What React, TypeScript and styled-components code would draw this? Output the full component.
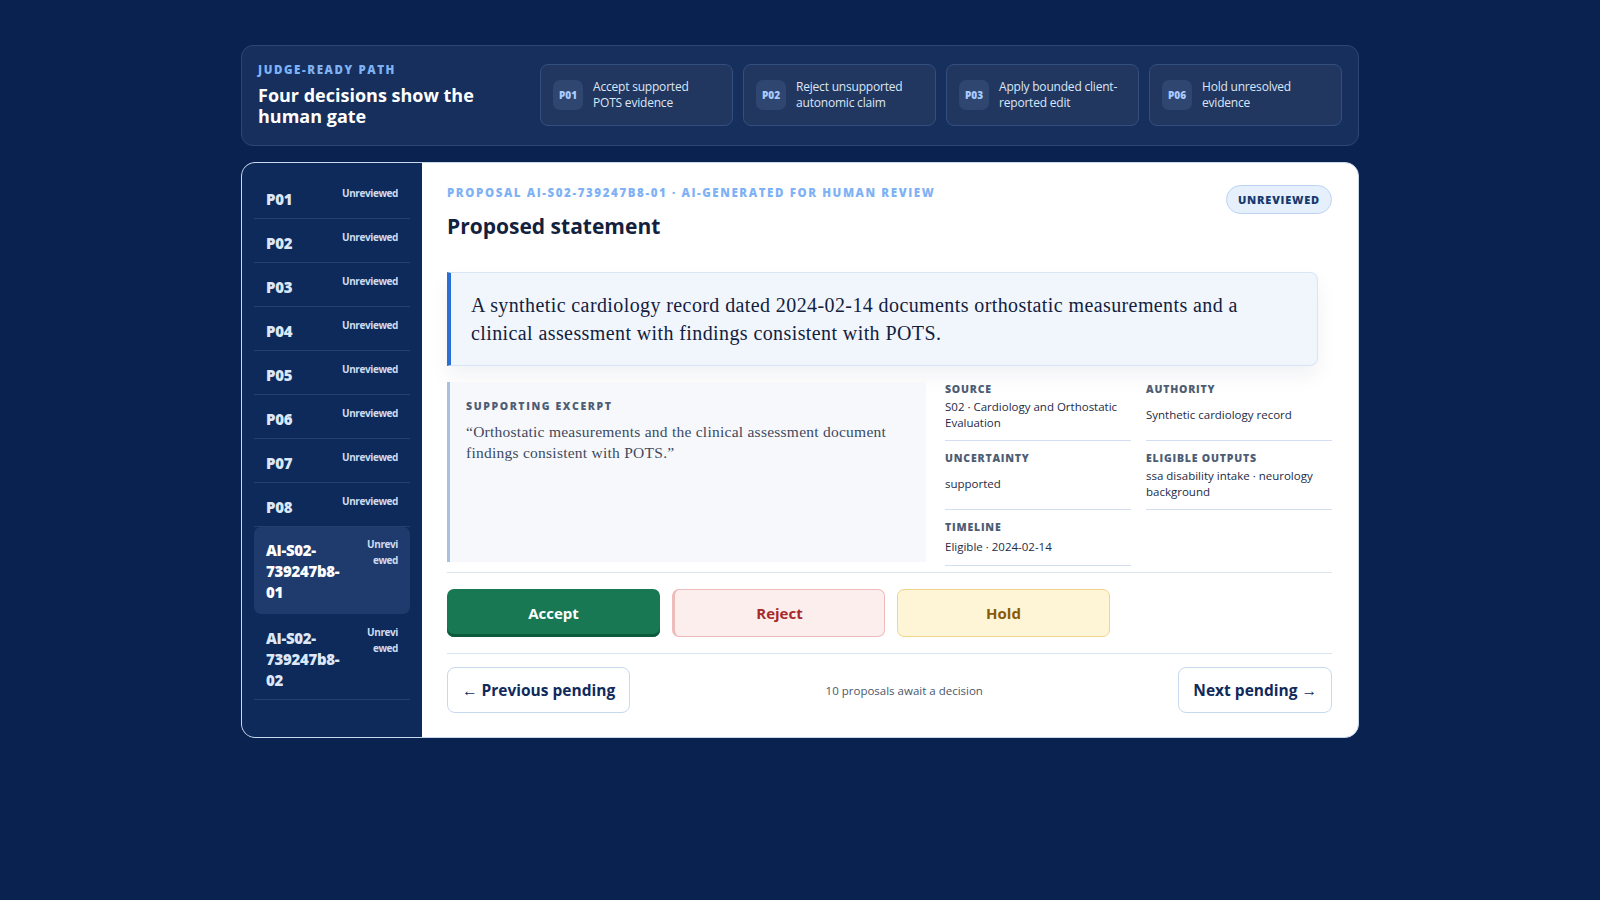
import React from "react";
import styled, { createGlobalStyle } from "styled-components";

const Global = createGlobalStyle`
  html, body { margin: 0; padding: 0; background: #0a2250; }
  body { font-family: "Open Sans", "Noto Sans", sans-serif; color: #0f1f3d; }
  * { box-sizing: border-box; }
`;

const Page = styled.div`
  min-height: 900px;
  background: #0a2250;
  padding: 45px 0;
`;
const Wrap = styled.div`
  width: 1118px;
  margin: 0 auto;
  display: flex;
  flex-direction: column;
  gap: 16px;
`;
const Header = styled.header`
  display: flex;
  align-items: center;
  gap: 10px;
  padding: 14px 16px 16px 16px;
  background: #162f5c;
  border: 1px solid #2c4677;
  border-radius: 12px;
  height: 101px;
`;
const HeaderTitle = styled.div`
  width: 272px;
  flex-shrink: 0;
`;
const Eyebrow = styled.div<{ $c?: string; $size?: number }>`
  font-size: ${(p) => p.$size ?? 12}px;
  font-weight: 800;
  letter-spacing: 1.6px;
  color: ${(p) => p.$c ?? "#7fb2f5"};
  text-transform: uppercase;
`;
const HTitle = styled.div`
  color: #fff;
  font-weight: 700;
  font-size: 18px;
  line-height: 21px;
  margin-top: 8px;
`;
const Step = styled.div`
  flex: 1;
  height: 62px;
  display: flex;
  align-items: center;
  gap: 10px;
  padding: 0 12px;
  background: #21375f;
  border: 1px solid #334f80;
  border-radius: 8px;
`;
const StepBadge = styled.div`
  width: 30px;
  height: 30px;
  border-radius: 7px;
  background: #2f4670;
  color: #a9cbff;
  font-size: 10px;
  font-weight: 800;
  display: flex;
  align-items: center;
  justify-content: center;
  flex-shrink: 0;
`;
const StepText = styled.div`
  color: #dbe6f7;
  font-size: 12px;
  line-height: 16px;
  letter-spacing: -0.2px;
`;
const Main = styled.div`
  display: flex;
  background: #fff;
  border-radius: 14px;
  overflow: hidden;
  border: 1px solid #c7d7ee;
  height: 576px;
`;
const Side = styled.nav`
  width: 180px;
  flex-shrink: 0;
  background: #0d2a5a;
  padding: 12px 12px 0 12px;
  display: flex;
  flex-direction: column;
`;
const Item = styled.div<{ $active?: boolean }>`
  display: flex;
  justify-content: space-between;
  align-items: flex-start;
  padding: ${(p) => (p.$active ? "9px 12px 10px 12px" : "10px 12px 8px 12px")};
  border-bottom: 1px solid ${(p) => (p.$active ? "transparent" : "#24406d")};
  background: ${(p) => (p.$active ? "#1f3b6e" : "transparent")};
  border-radius: ${(p) => (p.$active ? "7px" : "0")};
  min-height: 44px;
`;
const ItemId = styled.div<{ $active?: boolean }>`
  color: ${(p) => (p.$active ? "#fff" : "#dce7f8")};
  font-size: 15px;
  font-weight: 800;
  line-height: 21px;
  width: 90px;
  margin-top: 4px;
  letter-spacing: -0.3px;
`;
const ItemState = styled.div<{ $narrow?: boolean }>`
  color: #cfdcf0;
  font-size: 10px;
  font-weight: 700;
  letter-spacing: -0.4px;
  text-align: right;
  line-height: 16px;
  white-space: ${(p) => (p.$narrow ? "normal" : "nowrap")};
  width: ${(p) => (p.$narrow ? "34px" : "auto")};
  word-break: break-all;
`;
const Content = styled.section`
  flex: 1;
  padding: 22px 26px 20px 25px;
  display: flex;
  flex-direction: column;
`;
const TopRow = styled.div`
  display: flex;
  justify-content: space-between;
  align-items: flex-start;
`;
const Title = styled.h1`
  margin: 12px 0 0;
  font-size: 21px;
  font-weight: 700;
  color: #13213d;
`;
const Pill = styled.div`
  border: 1px solid #bcd3f0;
  background: #e6f0fc;
  color: #173a6e;
  border-radius: 16px;
  padding: 6px 11px;
  font-size: 11px;
  font-weight: 800;
  letter-spacing: 0.8px;
`;
const Statement = styled.blockquote`
  margin: 32px 14px 0 0;
  padding: 18px 20px;
  background: #f1f6fd;
  border: 1px solid #d9e5f5;
  border-left: 4px solid #2a6fd6;
  border-radius: 0 8px 8px 0;
  font-family: "Liberation Serif", "DejaVu Serif", serif;
  font-size: 20px;
  letter-spacing: 0.4px;
  line-height: 28px;
  color: #13213d;
  box-shadow: 0 10px 20px rgba(20, 40, 80, 0.06);
`;
const Evidence = styled.div`
  display: grid;
  grid-template-columns: 479px 1fr;
  gap: 19px;
  margin-top: 16px;
  padding-bottom: 6px;
  border-bottom: 1px solid #dbe5f1;
`;
const Excerpt = styled.div`
  background: #f6f8fb;
  border-left: 3px solid #a8c1e3;
  padding: 17px 16px;
  height: 180px;
`;
const Quote = styled.p`
  margin: 8px 0 0;
  font-family: "Liberation Serif", serif;
  font-size: 15.5px;
  letter-spacing: 0.25px;
  line-height: 21px;
  color: #3d4a5e;
`;
const Meta = styled.div`
  display: grid;
  grid-template-columns: 1fr 1fr;
  column-gap: 15px;
  align-content: start;
`;
const MetaCell = styled.div<{ $last?: boolean }>`
  border-bottom: 1px solid #d3dff0;
  padding: 0 0 6px;
  display: flex;
  flex-direction: column;
  min-height: ${(p) => (p.$last ? 46 : 59)}px;
  margin-bottom: ${(p) => (p.$last ? 0 : 10)}px;
`;
const MetaLabel = styled.div`
  font-size: 10.5px;
  font-weight: 800;
  letter-spacing: 0.8px;
  color: #4e5d74;
`;
const MetaValue = styled.div`
  font-size: 11.5px;
  line-height: 16px;
  color: #1d2b45;
  flex: 1;
  display: flex;
  align-items: center;
`;
const Actions = styled.div`
  display: flex;
  gap: 12px;
  padding: 16px 0;
  border-bottom: 1px solid #dbe5f1;
`;
const Btn = styled.button<{ $kind: "accept" | "reject" | "hold" }>`
  width: 213px;
  height: 48px;
  border-radius: 7px;
  font-family: inherit;
  font-size: 15px;
  font-weight: 700;
  cursor: pointer;
  ${(p) =>
    p.$kind === "accept"
      ? "background:#177853;color:#fff;border:none;box-shadow:inset 0 -3px 0 #0c5a3c;"
      : p.$kind === "reject"
      ? "background:#fdeeee;color:#a82a2a;border:1px solid #efbcbc;border-left:3px solid #efbcbc;"
      : "background:#fef4d6;color:#8a5a08;border:1px solid #efd58e;"}
`;
const Footer = styled.div`
  display: flex;
  align-items: center;
  justify-content: space-between;
  padding-top: 13px;
`;
const NavBtn = styled.button`
  height: 46px;
  padding: 0 14px;
  background: #fff;
  border: 1px solid #c8d8ee;
  border-radius: 8px;
  font-family: inherit;
  font-size: 15.5px;
  font-weight: 700;
  color: #102a5c;
`;
const Count = styled.div`
  font-size: 11.5px;
  color: #4a576c;
`;

const items = ["P01", "P02", "P03", "P04", "P05", "P06", "P07", "P08"];
const steps = [
  ["P01", "Accept supported POTS evidence"],
  ["P02", "Reject unsupported autonomic claim"],
  ["P03", "Apply bounded client-reported edit"],
  ["P06", "Hold unresolved evidence"],
];

export default function App() {
  return (
    <Page>
      <Global />
      <Wrap>
        <Header>
          <HeaderTitle>
            <Eyebrow $size={11.5}>Judge-ready path</Eyebrow>
            <HTitle>Four decisions show the human gate</HTitle>
          </HeaderTitle>
          {steps.map(([id, t]) => (
            <Step key={id}>
              <StepBadge>{id}</StepBadge>
              <StepText>{t}</StepText>
            </Step>
          ))}
        </Header>
        <Main>
          <Side>
            {items.map((id) => (
              <Item key={id}>
                <ItemId>{id}</ItemId>
                <ItemState>Unreviewed</ItemState>
              </Item>
            ))}
            <Item $active>
              <ItemId $active>AI-S02-739247b8-01</ItemId>
              <ItemState $narrow>Unreviewed</ItemState>
            </Item>
            <Item>
              <ItemId>AI-S02-739247b8-02</ItemId>
              <ItemState $narrow>Unreviewed</ItemState>
            </Item>
          </Side>
          <Content>
            <TopRow>
              <div>
                <Eyebrow $size={11.5}>Proposal AI-S02-739247B8-01 · AI-generated for human review</Eyebrow>
                <Title>Proposed statement</Title>
              </div>
              <Pill>UNREVIEWED</Pill>
            </TopRow>
            <Statement>
              A synthetic cardiology record dated 2024-02-14 documents orthostatic measurements and a clinical
              assessment with findings consistent with POTS.
            </Statement>
            <Evidence>
              <Excerpt>
                <Eyebrow $c="#4e5d74" $size={10.5}>Supporting excerpt</Eyebrow>
                <Quote>
                  “Orthostatic measurements and the clinical assessment document findings consistent with POTS.”
                </Quote>
              </Excerpt>
              <Meta>
                <MetaCell>
                  <MetaLabel>SOURCE</MetaLabel>
                  <MetaValue>S02 · Cardiology and Orthostatic Evaluation</MetaValue>
                </MetaCell>
                <MetaCell>
                  <MetaLabel>AUTHORITY</MetaLabel>
                  <MetaValue>Synthetic cardiology record</MetaValue>
                </MetaCell>
                <MetaCell>
                  <MetaLabel>UNCERTAINTY</MetaLabel>
                  <MetaValue>supported</MetaValue>
                </MetaCell>
                <MetaCell>
                  <MetaLabel>ELIGIBLE OUTPUTS</MetaLabel>
                  <MetaValue>ssa disability intake · neurology background</MetaValue>
                </MetaCell>
                <MetaCell $last>
                  <MetaLabel>TIMELINE</MetaLabel>
                  <MetaValue>Eligible · 2024-02-14</MetaValue>
                </MetaCell>
              </Meta>
            </Evidence>
            <Actions>
              <Btn $kind="accept">Accept</Btn>
              <Btn $kind="reject">Reject</Btn>
              <Btn $kind="hold">Hold</Btn>
            </Actions>
            <Footer>
              <NavBtn>← Previous pending</NavBtn>
              <Count>10 proposals await a decision</Count>
              <NavBtn>Next pending →</NavBtn>
            </Footer>
          </Content>
        </Main>
      </Wrap>
    </Page>
  );
}
